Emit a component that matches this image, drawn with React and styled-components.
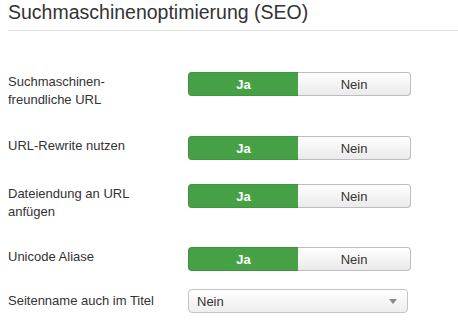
import React from "react";
import styled, { createGlobalStyle } from "styled-components";

const Global = createGlobalStyle`
  html, body { margin: 0; padding: 0; background: #fff; }
  body { font-family: "Liberation Sans", Arial, Helvetica, sans-serif; color: #333; }
  * { box-sizing: border-box; }
`;

const Page = styled.div`
  padding-left: 8px;
  width: 458px;
`;

const Title = styled.h2`
  margin: 0;
  font-size: 19.5px;
  line-height: 24px;
  font-weight: normal;
  color: #333;
  padding-bottom: 6px;
  border-bottom: 1px solid #e3e3e3;
`;

const Form = styled.div`
  padding-top: 41px;
  display: flex;
  flex-direction: column;
`;

const Row = styled.div`
  display: grid;
  grid-template-columns: 180px auto;
  align-items: start;
  height: ${(p) => p.$h}px;
`;

const Label = styled.div`
  font-size: 13px;
  line-height: 18px;
  color: #333;
  padding-top: ${(p) => (p.$pt != null ? p.$pt : 1)}px;
`;

const Toggle = styled.div`
  display: flex;
  width: 223px;
  height: 24px;
`;

const Opt = styled.div`
  flex: 0 0 ${(p) => p.$w}px;
  display: flex;
  align-items: center;
  justify-content: center;
  font-size: 13px;
  ${(p) =>
    p.$active
      ? `
    background: #46a146;
    color: #fff;
    font-weight: bold;
    border-radius: 4px 0 0 4px;
    border: 1px solid #3f933f;
    border-right: none;
  `
      : `
    background: linear-gradient(#ffffff, #eaeaea);
    color: #333;
    border: 1px solid #bdbdbd;
    border-left: none;
    border-radius: 0 4px 4px 0;
  `}
`;

const Select = styled.div`
  width: 220px;
  height: 24px;
  border: 1px solid #c4c4c4;
  border-radius: 4px;
  background: linear-gradient(#ffffff, #eeeeee);
  display: flex;
  align-items: center;
  justify-content: space-between;
  padding: 0 10px 0 8px;
  font-size: 13px;
  color: #333;
`;

const Caret = styled.span`
  width: 0;
  height: 0;
  border-left: 4px solid transparent;
  border-right: 4px solid transparent;
  border-top: 5px solid #888;
`;

const rows = [
  { label: "Suchmaschinen-\nfreundliche URL", h: 64 },
  { label: "URL-Rewrite nutzen", h: 48 },
  { label: "Dateiendung an URL\nanfügen", h: 63 },
  { label: "Unicode Aliase", h: 42 },
];

const Lines = ({ text }) =>
  text.split("\n").map((t, i) => (
    <React.Fragment key={i}>
      {i > 0 && <br />}
      {t}
    </React.Fragment>
  ));

export default function App() {
  return (
    <Page>
      <Global />
      <Title>Suchmaschinenoptimierung (SEO)</Title>
      <Form>
        {rows.map((r) => (
          <Row key={r.label} $h={r.h}>
            <Label>
              <Lines text={r.label} />
            </Label>
            <Toggle>
              <Opt $active $w={110}>Ja</Opt>
              <Opt $w={113}>Nein</Opt>
            </Toggle>
          </Row>
        ))}
        <Row $h={30}>
          <Label $pt={3}>Seitenname auch im Titel</Label>
          <Select>
            <span>Nein</span>
            <Caret />
          </Select>
        </Row>
      </Form>
    </Page>
  );
}
